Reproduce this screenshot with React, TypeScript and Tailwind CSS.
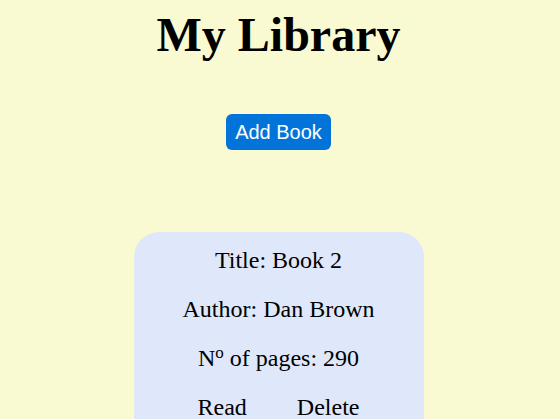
export default function App() {
  return (
    <div className="min-h-[419px] bg-[#fafad2] pr-[3px] flex flex-col items-center font-['Liberation_Serif',serif] text-black">
      <h1 className="mt-[11px] text-5xl leading-none font-bold">My Library</h1>

      <button className="mt-[55px] h-[36px] w-[105px] rounded-md bg-[#0274d9] text-white text-[20px] font-['Liberation_Sans',Arial,sans-serif]">
        Add Book
      </button>

      <div className="mt-[82px] w-[290px] rounded-[25px] bg-[#dfe7fa] pt-[14px] pb-6 flex flex-col items-center gap-[21px] text-2xl leading-[28px]">
        <p>Title: Book 2</p>
        <p>Author: Dan Brown</p>
        <p>
          N<sup className="text-[17px]">o</sup> of pages: 290
        </p>
        <div className="flex gap-[50px]">
          <button>Read</button>
          <button>Delete</button>
        </div>
      </div>
    </div>
  )
}
